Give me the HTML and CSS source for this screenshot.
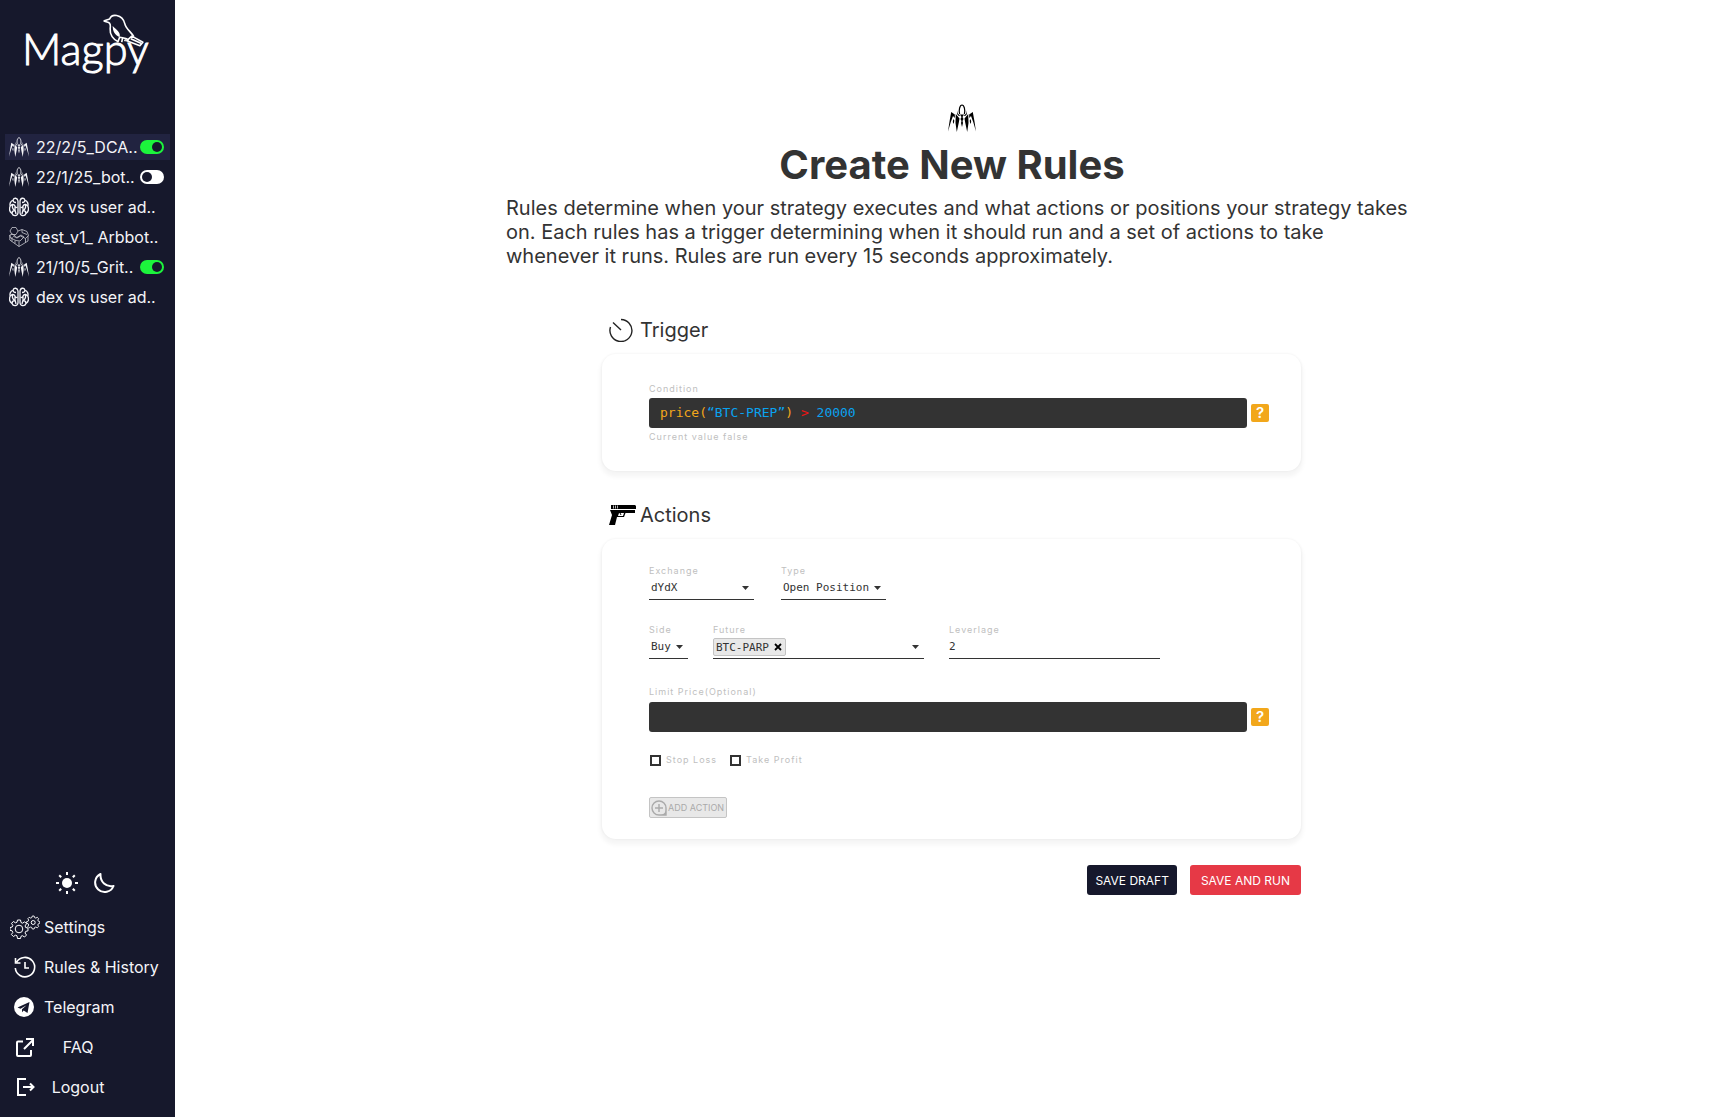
FILE: index.html
```html
<!DOCTYPE html>
<html lang="en">
<head>
    <meta charset="UTF-8">
    <meta name="viewport" content="width=device-width, initial-scale=1.0">
    <title>Magpy - Create New Rules</title>
    <link rel="stylesheet" href="styles.css">
</head>
<body>
    <!-- shared icons -->
    <svg class="sprite" aria-hidden="true">
        <symbol id="spider" viewBox="0 0 28 28">
            <path d="M11.6 10C10.6 6 11.8 1 14 1s3.400 5 2.400 9" fill="none" stroke="currentColor" stroke-width="1.200"/>
            <path d="M9 6.500l.6 3 2.600 2-1.400.4L9 10zM19 6.500l-.6 3-2.600 2 1.400.4L19 10z"/>
            <path d="M12 10.500h4l-1.500 2.500 1 2-1 2 .5 2L14 23l-1-4 .5-2-1-2 1-2z"/>
            <path d="M7.800 10l3.700 4.500-.7 4L8.800 28l-1.300-9zM20.200 10l-3.700 4.500.7 4 2 9.500 1.300-9z"/>
            <path d="M3.200 8l3.600 2.500v3.500L5 12l-2.200 6L0 27.500 1.600 17zM24.800 8l-3.600 2.500v3.500L23 12l2.200 6 2.800 9.500L26.400 17z"/>
            <path d="M5.300 15l1 1.500-.5 3.500-1-2zM22.700 15l-1 1.500.5 3.500 1-2z"/>
        </symbol>
        <symbol id="brain" viewBox="0 0 20 20">
            <g fill="none" stroke="currentColor" stroke-width="1.300">
                <path d="M9 4C8.500.5 5 .5 4 3 1.500 4 .5 7 1.200 9 0 12 .8 15 3 16.500c1 3 5.500 3 6-.5zM11 4c.5-3.500 4-3.500 5-1 2.500 1 3.500 4 2.800 6 1.200 3 .4 6-1.800 7.500-1 3-5.500 3-6-.5z"/>
                <path d="M4 3c0 2 1 2.500 3 2.500M1.200 9C3 7 5 7 6 9s1 2 2.500 1M3 16.500c0-2 1-3 3-3M4 7c-1 2-1 4 1 6M6 9v4l1 4M16 3c0 2-1 2.500-3 2.500M18.800 9C17 7 15 7 14 9s-1 2-2.500 1M17 16.500c0-2-1-3-3-3M16 7c1 2 1 4-1 6M14 9v4l-1 4"/>
            </g>
        </symbol>
        <symbol id="blocks" viewBox="0 0 20 20">
            <g fill="none" stroke="currentColor" stroke-width=".8">
                <path d="M3 .5h4L9 4 7 7.500H3L1 4zM9 4l4-1.500 5 2 1.500 4-3 3-5-2.500L8 11l-4-2M.8 8l3-1 4 3.500L12 8l3 2-4 4-4-.5L1.500 11zM.8 8v5l9.200 6.500 9-5.500V8.500M10 19.500v-5M3 10v4.500M16.500 11.500v4M13 2.500v3l5 2M6 13.500v3"/>
            </g>
        </symbol>
    </svg>

    <div class="container">
        <aside class="sidebar">
            <a class="logo" href="#home" aria-label="Magpy">
                <svg viewBox="0 0 130 62" aria-hidden="true">
                    <text x="-2" y="51" class="logo-text">Magpy</text>
                    <g fill="none" stroke="#fff" stroke-width="1.600" stroke-linejoin="round">
                        <path d="M79 7l6-2c1-3 4-4 7-3.500 5 1 7 4 8 8 1 5 6 8 9 13M79 7l5 1.500c2 1 2 3 1.500 6-.5 6 3 11 8 13"/>
                        <path d="M107 22l11 6-3 3.500-13-5zM106 24.500l10 4.500"/>
                        <path d="M93 28l2-5M97 28l1-5M100 27l1-3M95 23c4 1 7 1 9 3"/>
                    </g>
                    <path d="M88 12c4 4 8 6 7 11-5-2-7-6-7-11z" fill="#fff"/>
                </svg>
            </a>

            <ul class="bots">
                <li class="active">
                    <svg class="bot-icon" aria-hidden="true"><use href="#spider"/></svg>
                    <label for="bot1">22/2/5_DCA..</label>
                    <input class="toggle" type="checkbox" id="bot1" checked>
                </li>
                <li>
                    <svg class="bot-icon" aria-hidden="true"><use href="#spider"/></svg>
                    <label for="bot2">22/1/25_bot..</label>
                    <input class="toggle" type="checkbox" id="bot2">
                </li>
                <li>
                    <svg class="bot-icon" aria-hidden="true"><use href="#brain"/></svg>
                    <a href="#bot3">dex vs user ad..</a>
                </li>
                <li>
                    <svg class="bot-icon muted" aria-hidden="true"><use href="#blocks"/></svg>
                    <a href="#bot4">test_v1_ Arbbot..</a>
                </li>
                <li>
                    <svg class="bot-icon" aria-hidden="true"><use href="#spider"/></svg>
                    <label for="bot5">21/10/5_Grit..</label>
                    <input class="toggle" type="checkbox" id="bot5" checked>
                </li>
                <li>
                    <svg class="bot-icon" aria-hidden="true"><use href="#brain"/></svg>
                    <a href="#bot6">dex vs user ad..</a>
                </li>
            </ul>

            <div class="themes">
                <button type="button" aria-label="Light theme">
                    <svg viewBox="0 0 22 22" aria-hidden="true">
                        <circle cx="11" cy="11" r="5" fill="#fff"/>
                        <path d="M11 0v3M11 19v3M0 11h3M19 11h3M3.200 3.200l2 2M16.800 16.800l2 2M3.200 18.800l2-2M16.800 5.200l2-2" stroke="#fff" stroke-width="2"/>
                    </svg>
                </button>
                <button type="button" aria-label="Dark theme">
                    <svg viewBox="0 0 22 22" aria-hidden="true">
                        <path d="M7.500 2A9.500 9.500 0 1 0 20.500 14 C13 15.500 7 10 7.500 2z" fill="none" stroke="#fff" stroke-width="2" stroke-linejoin="round"/>
                    </svg>
                </button>
            </div>

            <nav class="menu">
                <a href="#settings">
                    <svg viewBox="0 0 30 24" aria-hidden="true">
                        <g fill="none" stroke="#fff">
                            <path d="M7.500 5h3l.5 2.500 1.500.7 2.200-1.400 1.800 1.900-1.400 2.200.6 1.600 2.300.5v2.800l-2.300.6-.7 1.600 1.500 2-1.900 2-2.200-1.300-1.400.6-.5 2.200h-3L7 20.800l-1.500-.6L3.400 21.500l-2-2 1.400-2-.7-1.700-2.100-.5v-2.700L2.200 12l.6-1.600-1.300-2 1.900-1.900 2.100 1.300L7 7.200z"/>
                            <circle cx="9" cy="14" r="3.800"/>
                            <path d="M22.300 1h1.800l.5 1.600 1.200.5 1.500-.8 1.300 1.300-.8 1.500.5 1.100 1.500.5v1.600l-1.500.5-.5 1.200.8 1.500-1.300 1.300-1.500-.8-1.200.5-.5 1.500h-1.800l-.5-1.500-1.100-.5-1.500.8-1.300-1.300.8-1.500-.5-1.200-1.600-.5V6.700l1.600-.5.5-1.100-.8-1.500 1.300-1.300 1.500.8 1.100-.5z" stroke-width=".9"/>
                            <circle cx="23.200" cy="7.500" r="2"/>
                        </g>
                    </svg>
                    <span>Settings</span>
                </a>
                <a href="#history">
                    <svg viewBox="0 0 30 24" aria-hidden="true">
                        <path d="M6.600 7.200A9.700 9.700 0 1 1 5.300 13M5.500 3v5h5M15 7v6h4" fill="none" stroke="#fff" stroke-width="1.600"/>
                    </svg>
                    <span>Rules &amp; History</span>
                </a>
                <a href="#telegram" class="centered">
                    <svg viewBox="0 0 30 24" aria-hidden="true">
                        <circle cx="14" cy="12" r="10" fill="#fff"/>
                        <path d="M7.500 12.500l12-5.500-2 11-3.800-2.500-1.700 1.800v-3l4.500-4-6 3.500z" fill="#16182c"/>
                    </svg>
                    <span>Telegram</span>
                </a>
                <a href="#faq" class="centered">
                    <svg viewBox="0 0 30 24" aria-hidden="true">
                        <path d="M13 6.500H8a1 1 0 0 0-1 1V20a1 1 0 0 0 1 1h12a1 1 0 0 0 1-1v-5M14 14l9-9M16 4h7v7" fill="none" stroke="#fff" stroke-width="2"/>
                    </svg>
                    <span>FAQ</span>
                </a>
                <a href="#logout" class="centered">
                    <svg viewBox="0 0 30 24" aria-hidden="true">
                        <path d="M16 4H8v16h8M13 12h11M20 8.500l3.500 3.500-3.500 3.500" fill="none" stroke="#fff" stroke-width="2"/>
                    </svg>
                    <span>Logout</span>
                </a>
            </nav>
        </aside>

        <main class="main-content">
            <header class="intro">
                <svg class="intro-icon" aria-hidden="true"><use href="#spider"/></svg>
                <h1>Create New Rules</h1>
                <p>Rules determine when your strategy executes and what actions or positions your strategy takes on. Each rules has a trigger determining when it should run and a set of actions to take whenever it runs. Rules are run every 15 seconds approximately.</p>
            </header>

            <form class="rules">
                <h2>
                    <svg viewBox="0 0 27 24" aria-hidden="true">
                        <path d="M12 1.500A11 11 0 1 1 1.500 9M4 4.500l8 7.500" fill="none" stroke="#222" stroke-width="1.400"/>
                    </svg>
                    Trigger
                </h2>
                <section class="card">
                    <div class="caption" id="condition-label">Condition</div>
                    <div class="code-row">
                        <div class="code" role="textbox" contenteditable="true" spellcheck="false" aria-labelledby="condition-label"><span class="fn">price(</span><span class="value">“BTC-PREP”</span><span class="fn">)</span> <span class="op">&gt;</span> <span class="value">20000</span></div>
                        <button type="button" class="help">?</button>
                    </div>
                    <div class="caption">Current value false</div>
                </section>

                <h2>
                    <svg viewBox="0 0 27 24" aria-hidden="true">
                        <path d="M2 2h24l1 1v3H2zM1 7h25v3H16.500l-1.500 4H8L6 22H0L3 12z" fill="#000"/>
                        <path d="M4.500 2.500v3M6.500 2.500v3M8.500 2.500v3" stroke="#fff" stroke-width=".7"/>
                        <path d="M10 10h5l-1 3H9z" fill="#fff"/>
                        <path d="M11 10l1 2" stroke="#000"/>
                    </svg>
                    Actions
                </h2>
                <section class="card actions">
                    <div class="fields">
                        <div class="field medium">
                            <label for="exchange">Exchange</label>
                            <select id="exchange"><option>dYdX</option></select>
                        </div>
                        <div class="field medium">
                            <label for="type">Type</label>
                            <select id="type"><option>Open Position</option></select>
                        </div>
                    </div>
                    <div class="fields">
                        <div class="field small">
                            <label for="side">Side</label>
                            <select id="side"><option>Buy</option><option>Sell</option></select>
                        </div>
                        <div class="field large">
                            <label for="future">Future</label>
                            <div class="tag-select">
                                <span class="tag">BTC-PARP
                                    <button type="button" aria-label="Remove BTC-PARP">
                                        <svg viewBox="0 0 8 8" aria-hidden="true"><path d="M1 1l6 6M7 1L1 7" stroke="#000" stroke-width="1.800"/></svg>
                                    </button>
                                </span>
                                <select id="future"><option></option></select>
                            </div>
                        </div>
                        <div class="field large">
                            <label for="leverage">Leverlage</label>
                            <input type="text" id="leverage" value="2">
                        </div>
                    </div>
                    <div class="limit">
                        <label class="caption" for="limit">Limit Price(Optional)</label>
                        <div class="code-row">
                            <input class="code" type="text" id="limit">
                            <button type="button" class="help">?</button>
                        </div>
                    </div>
                    <div class="checks">
                        <label class="caption"><input type="checkbox">Stop Loss</label>
                        <label class="caption"><input type="checkbox">Take Profit</label>
                    </div>
                    <button type="button" class="add">
                        <svg viewBox="0 0 16 16" aria-hidden="true">
                            <path d="M8 1a7 7 0 1 0 0 14h7V8a7 7 0 0 0-7-7zM8 4v8M4 8h8" fill="none" stroke="#aaa" stroke-width="1.400"/>
                            <path d="M15 10v5h-5c3-1 4-2 5-5z" fill="#aaa"/>
                        </svg>
                        ADD ACTION
                    </button>
                </section>

                <div class="buttons">
                    <button type="button" class="button">SAVE DRAFT</button>
                    <button type="submit" class="button run">SAVE AND RUN</button>
                </div>
            </form>
        </main>
    </div>
</body>
</html>
```
FILE: styles.css
```css
:root {
    --dark: #16182c;
    --active: #212340;
    --text: #333;
    --caption: #c0c0c0;
    --green: #1cf43c;
    --orange: #f2a71b;
    --red: #e63946;
    --mono: "DejaVu Sans Mono", "Liberation Mono", monospace;
}

* {
    box-sizing: border-box;
}

body {
    margin: 0;
    font-family: Inter, "Liberation Sans", sans-serif;
    color: var(--text);
    background-color: #fff;
}

button, input, select {
    font-family: inherit;
    margin: 0;
}

button {
    cursor: pointer;
}

.sprite {
    display: none;
}

.container {
    display: flex;
    min-height: 100vh;
}

/* Sidebar */
.sidebar {
    display: flex;
    flex-direction: column;
    flex: none;
    width: 175px;
    padding-bottom: 18px;
    background-color: var(--dark);
    color: #f4f4f8;
}

.sidebar a {
    color: inherit;
    text-decoration: none;
}

.logo {
    padding: 14px 20px 0 24px;
}

.logo svg {
    display: block;
    width: 100%;
    overflow: visible;
}

.logo-text {
    font-family: Lato, sans-serif;
    font-size: 43px;
    font-weight: 300;
    fill: #fff;
    stroke: #fff;
    stroke-width: 1px;
}

.bots {
    display: flex;
    flex-direction: column;
    gap: 4px;
    margin: 58px 5px 0;
    padding: 0;
    list-style: none;
    font-size: 16px;
}

.bots li {
    display: flex;
    align-items: center;
    height: 26px;
    padding: 0 6px 0 4px;
    white-space: nowrap;
}

.bots .active {
    background-color: var(--active);
}

.bot-icon {
    flex: none;
    width: 20px;
    height: 20px;
    margin-right: 7px;
    fill: currentColor;
}

.muted {
    opacity: 0.8;
}

.toggle {
    appearance: none;
    display: flex;
    flex: none;
    width: 24px;
    height: 14px;
    margin-left: auto;
    padding: 2px;
    border-radius: 7px;
    background-color: #fff;
}

.toggle::before {
    content: "";
    width: 10px;
    height: 10px;
    border-radius: 50%;
    background-color: var(--dark);
}

.toggle:checked {
    justify-content: flex-end;
    background-color: var(--green);
}

.themes {
    display: flex;
    gap: 15px;
    margin: auto 0 21px 56px;
}

.themes button {
    width: 22px;
    height: 22px;
    padding: 0;
    border: none;
    background: none;
}

.themes svg {
    display: block;
}

.menu {
    display: flex;
    flex-direction: column;
    gap: 16px;
    padding-left: 10px;
    font-size: 16px;
}

.menu a {
    display: flex;
    align-items: center;
    gap: 4px;
    height: 24px;
}

.menu svg {
    width: 30px;
    height: 24px;
}

.centered span {
    width: 68px;
    text-align: center;
}

/* Main */
.main-content {
    display: flex;
    flex-direction: column;
    align-items: center;
    flex: 1;
    padding: 104px 20px 40px;
}

.intro {
    max-width: 912px;
    margin-left: 21px;
}

.intro-icon {
    display: block;
    width: 28px;
    height: 28px;
    margin: 0 auto 9px;
    fill: #000;
    color: #000;
}

h1 {
    margin: 0 20px 7px 0;
    font-size: 40px;
    line-height: 48px;
    text-align: center;
}

.intro p {
    margin: 0;
    font-size: 20px;
    line-height: 24px;
}

.rules {
    width: 100%;
    max-width: 699px;
    margin-top: 50px;
}

h2 {
    display: flex;
    align-items: center;
    gap: 4px;
    margin: 0 0 12px 7px;
    font-size: 20px;
    font-weight: 400;
    line-height: 24px;
}

h2 svg {
    width: 27px;
    height: 24px;
}

.card {
    margin-bottom: 32px;
    padding: 29px 32px 28px 47px;
    border-radius: 14px;
    background-color: #fff;
    box-shadow: 0 0 2px 1px rgba(0, 0, 0, 0.03), 0 4px 4px 2px rgba(0, 0, 0, 0.04);
}

.caption,
.field label {
    display: block;
    color: var(--caption);
    font-size: 9px;
    font-weight: 400;
    letter-spacing: 1px;
    line-height: 12px;
}

.code-row {
    display: flex;
    align-items: center;
    gap: 4px;
    margin: 3px 0;
}

.code {
    flex: 1;
    height: 30px;
    padding: 0 11px;
    border: none;
    border-radius: 3px;
    background-color: #333;
    color: #fff;
    font-family: var(--mono);
    font-size: 13px;
    line-height: 30px;
}

.fn {
    color: var(--orange);
}

.value {
    color: #0aa2f0;
}

.op {
    color: #f01414;
}

.help {
    width: 18px;
    height: 18px;
    padding: 0;
    border: none;
    border-radius: 2px;
    background-color: var(--orange);
    color: #fff;
    font-size: 15px;
    font-weight: 600;
    line-height: 18px;
}

.actions {
    display: flex;
    flex-direction: column;
    margin-bottom: 26px;
    padding-top: 26px;
    padding-bottom: 21px;
}

.fields {
    display: flex;
    gap: 27px;
    margin-bottom: 24px;
}

.fields + .fields {
    gap: 25px;
}

.small {
    width: 39px;
}

.medium {
    width: 105px;
}

.large {
    width: 211px;
}

.field select,
.field input {
    display: block;
    width: 100%;
    height: 23px;
    padding: 0 0 2px 2px;
    border: none;
    border-bottom: 1px solid var(--text);
    border-radius: 0;
    background: none;
    color: var(--text);
    font-family: var(--mono);
    font-size: 11px;
}

.field input {
    padding-left: 0;
}

.field select {
    appearance: none;
    background: url("data:image/svg+xml,%3Csvg xmlns='http://www.w3.org/2000/svg' viewBox='0 0 7 4'%3E%3Cpath d='M0 0h7L3.500 4z' fill='%23333'/%3E%3C/svg%3E") no-repeat right 5px top 9px / 7px 4px;
}

.tag-select {
    display: flex;
    align-items: center;
    height: 23px;
    border-bottom: 1px solid var(--text);
}

.field .tag-select select {
    flex: 1;
    width: auto;
    border: none;
}

.tag {
    display: flex;
    align-items: center;
    gap: 5px;
    height: 18px;
    padding: 0 3px 0 2px;
    border: 1px solid #c4c4c4;
    border-radius: 2px;
    background-color: #e8e8e8;
    font-family: var(--mono);
    font-size: 11px;
}

.tag button {
    width: 8px;
    height: 8px;
    padding: 0;
    border: none;
    background: none;
}

.tag svg {
    display: block;
}

.limit {
    margin-top: 3px;
}

.limit .code-row {
    margin: 4px 0 22px;
}

.checks {
    display: flex;
    gap: 13px;
    margin-bottom: 31px;
    padding-left: 1px;
}

.checks label {
    display: flex;
    align-items: center;
    gap: 5px;
}

.checks input {
    appearance: none;
    width: 11px;
    height: 11px;
    border: 2px solid #333;
    background-color: #fff;
}

.checks input:checked {
    background-color: #333;
}

.add {
    display: flex;
    align-items: center;
    align-self: flex-start;
    gap: 1px;
    height: 21px;
    padding: 0 2px 0 1px;
    border: 1px solid #c4c4c4;
    border-radius: 2px;
    background-color: #e8e8e8;
    color: #aaa;
    font-size: 9px;
}

.add svg {
    width: 16px;
    height: 16px;
}

.buttons {
    display: flex;
    justify-content: flex-end;
    gap: 13px;
}

.button {
    height: 30px;
    padding: 0 8px;
    border: none;
    border-radius: 3px;
    background-color: var(--dark);
    color: #fff;
    font-size: 12px;
}

.run {
    padding: 0 11px;
    background-color: var(--red);
}
```
